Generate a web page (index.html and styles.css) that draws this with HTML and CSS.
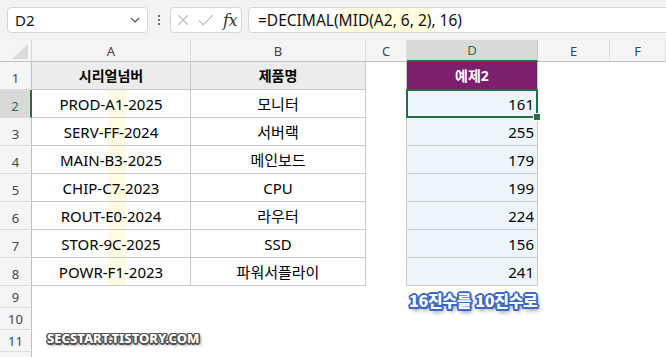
FILE: index.html
```html
<!DOCTYPE html>
<html lang="ko">
<head>
<meta charset="utf-8">
<title>DECIMAL</title>
<link rel="stylesheet" href="styles.css">
</head>
<body>
<div class="app">
  <div class="toolbar">
    <div class="namebox">
      <span class="name">D2</span>
      <svg class="chev" width="10" height="6" viewBox="0 0 10 6"><path d="M1 1 L5 5 L9 1" fill="none" stroke="#555" stroke-width="1.2"/></svg>
    </div>
    <div class="dots"><span></span><span></span><span></span></div>
    <div class="fxbox">
      <svg width="14" height="14" viewBox="0 0 14 14"><path d="M1.5 1.5 L12.5 12.5 M12.5 1.5 L1.5 12.5" stroke="#b4b4b4" stroke-width="1.2" fill="none"/></svg>
      <svg width="18" height="14" viewBox="0 0 18 14"><path d="M1 7.5 L6 12.5 L17 1.5" stroke="#b4b4b4" stroke-width="1.2" fill="none"/></svg>
      <span class="fx">fx</span>
    </div>
    <div class="formula"><span class="ft">=DECIMAL(</span><span class="ft hl">MID(A2, 6, 2)</span><span class="ft">, 16)</span></div>
  </div>

  <div class="sheet">
    <!-- column header row -->
    <div class="corner"><svg width="16" height="15" viewBox="0 0 16 15"><path d="M16 0 L16 15 L0 15 Z" fill="#dadada"/></svg></div>
    <div class="ch">A</div>
    <div class="ch">B</div>
    <div class="ch">C</div>
    <div class="ch ch-sel">D</div>
    <div class="ch">E</div>
    <div class="ch">F</div>

    <!-- row 1 -->
    <div class="rh">1</div>
    <div class="c t th">시리얼넘버</div>
    <div class="c t th">제품명</div>
    <div class="c cl"></div>
    <div class="c t dh">예제2</div>
    <div class="c"></div>
    <div class="c"></div>

    <!-- row 2 -->
    <div class="rh rh-sel">2</div>
    <div class="c t a">PROD-A1-2025</div>
    <div class="c t">모니터</div>
    <div class="c cl"></div>
    <div class="c t d cur">161<span class="selbox"><span class="handle"></span></span></div>
    <div class="c"></div>
    <div class="c"></div>

    <!-- row 3 -->
    <div class="rh">3</div>
    <div class="c t a">SERV-FF-2024</div>
    <div class="c t">서버랙</div>
    <div class="c cl"></div>
    <div class="c t d">255</div>
    <div class="c"></div>
    <div class="c"></div>

    <!-- row 4 -->
    <div class="rh">4</div>
    <div class="c t a">MAIN-B3-2025</div>
    <div class="c t">메인보드</div>
    <div class="c cl"></div>
    <div class="c t d">179</div>
    <div class="c"></div>
    <div class="c"></div>

    <!-- row 5 -->
    <div class="rh">5</div>
    <div class="c t a">CHIP-C7-2023</div>
    <div class="c t">CPU</div>
    <div class="c cl"></div>
    <div class="c t d">199</div>
    <div class="c"></div>
    <div class="c"></div>

    <!-- row 6 -->
    <div class="rh">6</div>
    <div class="c t a">ROUT-E0-2024</div>
    <div class="c t">라우터</div>
    <div class="c cl"></div>
    <div class="c t d">224</div>
    <div class="c"></div>
    <div class="c"></div>

    <!-- row 7 -->
    <div class="rh">7</div>
    <div class="c t a">STOR-9C-2025</div>
    <div class="c t">SSD</div>
    <div class="c cl"></div>
    <div class="c t d">156</div>
    <div class="c"></div>
    <div class="c"></div>

    <!-- row 8 -->
    <div class="rh">8</div>
    <div class="c t a">POWR-F1-2023</div>
    <div class="c t">파워서플라이</div>
    <div class="c cl"></div>
    <div class="c t d">241</div>
    <div class="c"></div>
    <div class="c"></div>

    <!-- rows 9-12 -->
    <div class="rh sm">9</div>
    <div class="c"></div><div class="c"></div><div class="c"></div><div class="c"></div><div class="c"></div><div class="c"></div>
    <div class="rh sm">10</div>
    <div class="c"></div><div class="c"></div><div class="c"></div><div class="c"></div><div class="c"></div><div class="c"></div>
    <div class="rh sm">11</div>
    <div class="c"></div><div class="c"></div><div class="c"></div><div class="c"></div><div class="c"></div><div class="c"></div>
    <div class="rh sm"></div>
    <div class="c"></div><div class="c"></div><div class="c"></div><div class="c"></div><div class="c"></div><div class="c"></div>

    <div class="note">16진수를 10진수로</div>
    <div class="mark">SECSTART.TISTORY.COM</div>
  </div>
</div>
</body>
</html>
```

FILE: styles.css
```css
html, body {
  margin: 0;
  padding: 0;
  width: 666px;
  height: 357px;
  overflow: hidden;
  background: #ffffff;
}

.app {
  font-family: "Noto Sans", "Noto Sans CJK KR", sans-serif;
  color: #000;
}

/* ---------- formula bar ---------- */
.toolbar {
  height: 40px;
  box-sizing: border-box;
  padding: 7px 0 7px 7px;
  background: #f3f3f3;
  display: flex;
  align-items: stretch;
}

.namebox {
  width: 141px;
  box-sizing: border-box;
  background: #fff;
  border: 1px solid #d6d6d6;
  border-radius: 4px;
  display: flex;
  align-items: center;
  justify-content: space-between;
  padding: 0 7px 0 7px;
}

.name {
  font-size: 15px;
  color: #111;
}

.chev {
  display: block;
}

.dots {
  width: 22px;
  display: flex;
  flex-direction: column;
  align-items: center;
  justify-content: center;
  gap: 2px;
}

.dots span {
  width: 2px;
  height: 2px;
  background: #444;
  border-radius: 1px;
}

.fxbox {
  width: 72px;
  box-sizing: border-box;
  background: #fff;
  border: 1px solid #d6d6d6;
  border-radius: 4px;
  display: flex;
  align-items: center;
  padding: 0 4px 0 6px;
  gap: 9px;
}

.fx {
  font-family: "DejaVu Serif", "Liberation Serif", serif;
  font-style: italic;
  font-size: 16px;
  color: #333;
  letter-spacing: -0.5px;
}

.formula {
  flex: 1;
  margin-left: 6px;
  margin-right: -8px;
  box-sizing: border-box;
  background: #fff;
  border: 1px solid #d6d6d6;
  border-radius: 4px;
  display: flex;
  align-items: stretch;
  padding-left: 9px;
  font-size: 15.5px;
  color: #111;
}

.ft {
  display: flex;
  align-items: center;
  white-space: pre;
}

.hl {
  background: #fffbdc;
}

/* ---------- sheet grid ---------- */
.sheet {
  position: relative;
  display: grid;
  grid-template-columns: 32px 159px 175px 41px 131px 72px 1fr;
  grid-template-rows: 22px repeat(8, 28px) repeat(4, 22px);
}

.corner {
  background: #f5f5f5;
  border-right: 1px solid #d4d4d4;
  border-bottom: 1px solid #bfbfbf;
  display: flex;
  align-items: flex-end;
  justify-content: flex-end;
  padding: 0 3px 2px 0;
}

.corner svg {
  display: block;
}

.ch {
  background: #f5f5f5;
  border-right: 1px solid #dcdcdc;
  border-bottom: 1px solid #bfbfbf;
  display: flex;
  align-items: center;
  justify-content: center;
  font-size: 13px;
  color: #444;
}

.ch-sel {
  background: #d9d9d9;
  color: #1f7145;
  border-bottom: 2px solid #1f7145;
  border-right-color: #c4c4c4;
}

.rh {
  background: #f5f5f5;
  border-right: 1px solid #bfbfbf;
  border-bottom: 1px solid #dcdcdc;
  display: flex;
  align-items: flex-end;
  justify-content: center;
  padding-bottom: 2px;
  box-sizing: border-box;
  font-size: 13px;
  color: #444;
}

.rh.sm {
  align-items: center;
  padding-bottom: 0;
}

.rh-sel {
  background: #d9d9d9;
  color: #1f7145;
  border-right: 2px solid #1f7145;
}

.c {
  box-sizing: border-box;
  border-right: 1px solid transparent;
  border-bottom: 1px solid transparent;
  display: flex;
  align-items: flex-end;
  justify-content: center;
  padding-bottom: 3px;
  font-size: 15px;
  line-height: 20px;
  white-space: nowrap;
}

.t {
  border-right-color: #c9c9c9;
  border-bottom-color: #c9c9c9;
}

.cl {
  border-right-color: #c9c9c9;
}

.th {
  background: #ececec;
  font-weight: 700;
  font-size: 14px;
}

.a {
  background: linear-gradient(90deg, transparent 76px, #fefbe2 76px, #fefbe2 94px, transparent 94px);
}

.d {
  background: #eef6fd;
  justify-content: flex-end;
  padding-right: 3px;
}

.dh {
  background: #7b1f6e;
  color: #fff;
  font-weight: 700;
  font-size: 14px;
}

.cur {
  position: relative;
}

.selbox {
  position: absolute;
  left: -1px;
  top: -1px;
  right: -1px;
  bottom: -1px;
  border: 2px solid #1f7145;
}

.handle {
  position: absolute;
  right: -5px;
  bottom: -5px;
  width: 6px;
  height: 6px;
  background: #1f7145;
  border: 1px solid #fff;
}

/* ---------- overlays ---------- */
.note {
  position: absolute;
  left: 409px;
  top: 249px;
  font-family: "Noto Sans CJK KR", "Noto Sans", sans-serif;
  font-weight: 900;
  font-size: 16px;
  line-height: 22px;
  color: #fff;
  letter-spacing: -0.3px;
  text-shadow:
    -1.5px -1.5px 0 #3a68c2, 1.5px -1.5px 0 #3a68c2,
    -1.5px 1.5px 0 #3a68c2, 1.5px 1.5px 0 #3a68c2,
    0 -2px 0 #3a68c2, 0 2px 0 #3a68c2,
    -2px 0 0 #3a68c2, 2px 0 0 #3a68c2,
    2px 3px 4px rgba(0, 0, 0, 0.55);
}

.mark {
  position: absolute;
  left: 47px;
  top: 290px;
  font-family: "Noto Sans", sans-serif;
  font-weight: 800;
  font-size: 13px;
  line-height: 16px;
  letter-spacing: 0;
  color: #fff;
  text-shadow:
    -1px -1px 0 #505050, 1px -1px 0 #505050,
    -1px 1px 0 #505050, 1px 1px 0 #505050,
    0 -1.5px 0 #505050, 0 1.5px 0 #505050,
    -1.5px 0 0 #505050, 1.5px 0 0 #505050,
    2px 2px 3px rgba(0, 0, 0, 0.6);
}
```
